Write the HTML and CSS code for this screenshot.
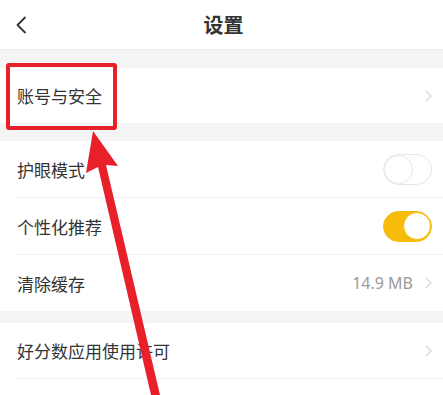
FILE: index.html
```html
<!DOCTYPE html>
<html lang="zh-CN">
<head>
  <meta charset="UTF-8">
  <meta name="viewport" content="width=device-width, initial-scale=1.0">
  <title>设置</title>
  <link rel="stylesheet" href="styles.css">
</head>
<body>
  <div class="header">
    <svg class="back" width="12" height="18" viewBox="0 0 12 18">
      <path d="M10 1.5 L2.5 9 L10 16.5" fill="none" stroke="#333" stroke-width="1.8" stroke-linecap="round" stroke-linejoin="round"/>
    </svg>
    <h1>设置</h1>
  </div>

  <div class="group first">
    <div class="row">
      <span class="label">账号与安全</span>
      <span class="chev"></span>
    </div>
  </div>

  <div class="group">
    <div class="row tall">
      <span class="label">护眼模式</span>
      <span class="toggle"></span>
    </div>
    <div class="row tall">
      <span class="label">个性化推荐</span>
      <span class="toggle on"></span>
    </div>
    <div class="row tall">
      <span class="label">清除缓存</span>
      <span class="value">14.9 MB</span>
      <span class="chev"></span>
    </div>
  </div>

  <div class="group small-gap">
    <div class="row">
      <span class="label">好分数应用使用许可</span>
      <span class="chev"></span>
    </div>
    <div class="row rest"></div>
  </div>

  <!-- annotation overlay -->
  <div class="mark-box"></div>
  <svg class="arrow" width="443" height="395" viewBox="0 0 443 395">
    <polygon points="93,131 118,166 106,165 160,395 151,395 98,167 86,173" fill="#e8202a"/>
  </svg>
</body>
</html>
```

FILE: styles.css
```css
body {
  margin: 0;
  background-color: #f4f4f4;
  font-family: "Noto Sans CJK SC", "Noto Sans", sans-serif;
  color: #333;
  position: relative;
  height: 395px;
  overflow: hidden;
}

.header {
  height: 49px;
  background: #fff;
  border-bottom: 1px solid #e9e9e9;
  display: flex;
  align-items: center;
  justify-content: center;
  padding-left: 4px;
  position: relative;
}

.header h1 {
  margin: 0;
  font-size: 20px;
  font-weight: 700;
  color: #333;
}

.back {
  position: absolute;
  left: 15px;
  top: 16px;
}

.group {
  background: #fff;
  margin-top: 18px;
}

.group.small-gap {
  margin-top: 12px;
}

.row {
  height: 55px;
  display: flex;
  align-items: center;
  padding: 0 11px 0 17px;
  position: relative;
}

.row.tall {
  height: 56px;
}

.row.rest {
  height: 17px;
}

.row + .row::before {
  content: "";
  position: absolute;
  left: 17px;
  right: 0;
  top: -1px;
  border-top: 1px solid #efefef;
}

.row + .row {
  margin-top: 1px;
}

.label {
  font-size: 17px;
  flex: 1;
}

.value {
  font-family: "Noto Sans", sans-serif;
  font-size: 16px;
  color: #9a9a9a;
  margin-right: 9px;
}

.chev {
  width: 7px;
  height: 7px;
  border-top: 1.5px solid #cfcfcf;
  border-right: 1.5px solid #cfcfcf;
  transform: rotate(45deg);
  margin-right: 2px;
}

/* switches */
.toggle {
  width: 47px;
  height: 29px;
  border: 1px solid #e7e7e7;
  border-radius: 16px;
  background: #fff;
  position: relative;
}

.toggle::after {
  content: "";
  position: absolute;
  left: 0;
  top: 0;
  width: 27px;
  height: 27px;
  border-radius: 50%;
  border: 1px solid #e7e7e7;
  background: #fff;
}

.toggle.on {
  background: #f7bc0b;
  border-color: #f7bc0b;
}

.toggle.on::after {
  left: auto;
  right: 0;
  border: 1.5px solid #f7bc0b;
  width: 26px;
  height: 26px;
}

/* red annotation */
.mark-box {
  position: absolute;
  left: 6px;
  top: 63px;
  width: 103px;
  height: 59px;
  border: 4px solid #e8202a;
  border-radius: 3px;
}

.arrow {
  position: absolute;
  left: 0;
  top: 0;
}
```
